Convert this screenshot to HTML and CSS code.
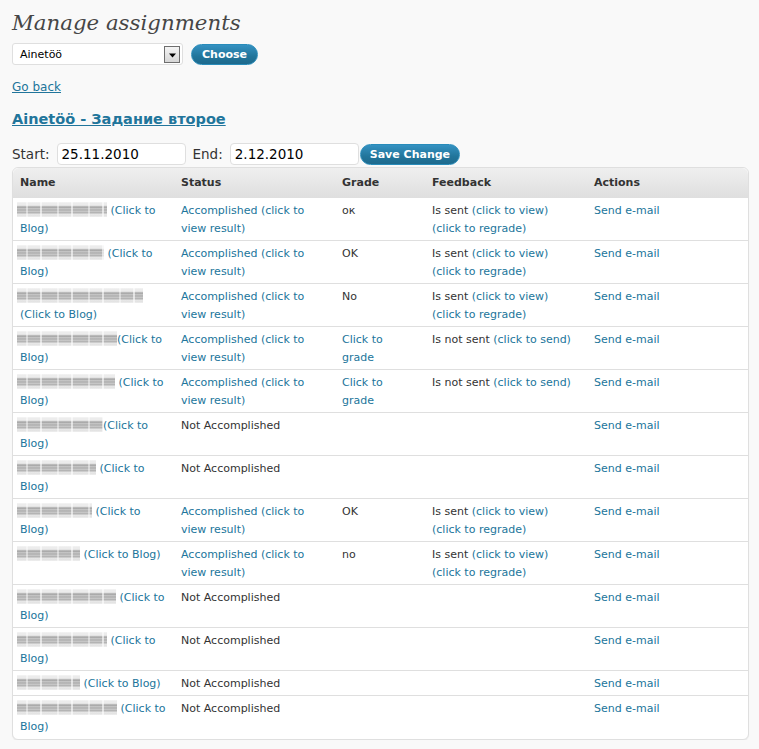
FILE: index.html
```html
<!DOCTYPE html>
<html>
<head>
<meta charset="utf-8">
<title>Manage assignments</title>
<link rel="stylesheet" href="styles.css">
</head>
<body>
<div class="wrap">
  <h2 class="title">Manage assignments</h2>
  <div class="choose-row">
    <div class="select"><span class="select-text">Ainetöö</span><span class="select-arrow"><svg width="9" height="5" viewBox="0 0 9 5"><path d="M1 0.5h7L4.5 4.5z" fill="#000"/></svg></span></div>
    <button class="btn">Choose</button>
  </div>
  <p class="back"><a href="#">Go back</a></p>
  <h3 class="task"><a href="#">Ainetöö - Задание второе</a></h3>
  <div class="dates">
    <label class="lbl">Start:</label><span class="field">25.11.2010</span>
    <label class="lbl lbl-end">End:</label><span class="field">2.12.2010</span>
    <button class="btn btn-save">Save Change</button>
  </div>
  <table class="grid">
    <thead>
      <tr><th class="c-name">Name</th><th class="c-status">Status</th><th class="c-grade">Grade</th><th class="c-fb">Feedback</th><th class="c-act">Actions</th></tr>
    </thead>
    <tbody>
      <tr><td><span class="blur" style="width:90px"></span> <a href="#">(Click to Blog)</a></td><td><a href="#">Accomplished (click to view result)</a></td><td>ок</td><td>Is sent <a href="#">(click to view)</a> <a href="#">(click to regrade)</a></td><td><a href="#">Send e-mail</a></td></tr>
      <tr><td><span class="blur" style="width:87px"></span> <a href="#">(Click to Blog)</a></td><td><a href="#">Accomplished (click to view result)</a></td><td>OK</td><td>Is sent <a href="#">(click to view)</a> <a href="#">(click to regrade)</a></td><td><a href="#">Send e-mail</a></td></tr>
      <tr><td><span class="blur" style="width:126px"></span> <a href="#">(Click to Blog)</a></td><td><a href="#">Accomplished (click to view result)</a></td><td>No</td><td>Is sent <a href="#">(click to view)</a> <a href="#">(click to regrade)</a></td><td><a href="#">Send e-mail</a></td></tr>
      <tr><td><span class="blur" style="width:100px"></span><a href="#">(Click to Blog)</a></td><td><a href="#">Accomplished (click to view result)</a></td><td><a href="#">Click to grade</a></td><td>Is not sent <a href="#">(click to send)</a></td><td><a href="#">Send e-mail</a></td></tr>
      <tr><td><span class="blur" style="width:98px"></span> <a href="#">(Click to Blog)</a></td><td><a href="#">Accomplished (click to view result)</a></td><td><a href="#">Click to grade</a></td><td>Is not sent <a href="#">(click to send)</a></td><td><a href="#">Send e-mail</a></td></tr>
      <tr><td><span class="blur" style="width:86px"></span><a href="#">(Click to Blog)</a></td><td>Not Accomplished</td><td></td><td></td><td><a href="#">Send e-mail</a></td></tr>
      <tr><td><span class="blur" style="width:79px"></span> <a href="#">(Click to Blog)</a></td><td>Not Accomplished</td><td></td><td></td><td><a href="#">Send e-mail</a></td></tr>
      <tr><td><span class="blur" style="width:75px"></span> <a href="#">(Click to Blog)</a></td><td><a href="#">Accomplished (click to view result)</a></td><td>OK</td><td>Is sent <a href="#">(click to view)</a> <a href="#">(click to regrade)</a></td><td><a href="#">Send e-mail</a></td></tr>
      <tr><td><span class="blur" style="width:63px"></span> <a href="#">(Click to Blog)</a></td><td><a href="#">Accomplished (click to view result)</a></td><td>no</td><td>Is sent <a href="#">(click to view)</a> <a href="#">(click to regrade)</a></td><td><a href="#">Send e-mail</a></td></tr>
      <tr><td><span class="blur" style="width:99px"></span> <a href="#">(Click to Blog)</a></td><td>Not Accomplished</td><td></td><td></td><td><a href="#">Send e-mail</a></td></tr>
      <tr><td><span class="blur" style="width:90px"></span> <a href="#">(Click to Blog)</a></td><td>Not Accomplished</td><td></td><td></td><td><a href="#">Send e-mail</a></td></tr>
      <tr><td><span class="blur" style="width:63px"></span> <a href="#">(Click to Blog)</a></td><td>Not Accomplished</td><td></td><td></td><td><a href="#">Send e-mail</a></td></tr>
      <tr><td><span class="blur" style="width:100px"></span> <a href="#">(Click to Blog)</a></td><td>Not Accomplished</td><td></td><td></td><td><a href="#">Send e-mail</a></td></tr>
    </tbody>
  </table>
</div>
</body>
</html>
```
FILE: styles.css
```css
html, body {
  margin: 0;
  padding: 0;
  background: #f9f9f9;
}
body {
  font-family: "DejaVu Sans", Verdana, sans-serif;
  font-size: 11px;
  color: #333;
}
a {
  color: #21759b;
  text-decoration: none;
}
.wrap {
  padding: 0 10px 0 12px;
}
.title {
  margin: 0;
  padding-top: 8px;
  height: 43px;
  box-sizing: border-box;
  font-family: "DejaVu Serif", Georgia, serif;
  font-style: italic;
  font-weight: normal;
  font-size: 21.3px;
  line-height: 29px;
  color: #464646;
}
.choose-row {
  display: flex;
  align-items: center;
  gap: 8px;
  height: 22px;
}
.select {
  box-sizing: border-box;
  width: 171px;
  height: 22px;
  background: #fff;
  border: 1px solid #dfdfdf;
  border-radius: 3px;
  display: flex;
  align-items: center;
  justify-content: space-between;
  padding: 0 2px 0 7px;
}
.select-text {
  font-size: 11px;
  color: #000;
}
.select-arrow {
  box-sizing: border-box;
  width: 16px;
  height: 17px;
  border: 1px solid #6e6e6e;
  background: linear-gradient(#f4f4f4, #d6d6d6);
  display: flex;
  align-items: center;
  justify-content: center;
  padding-top: 2px;
}
.btn {
  font-family: "DejaVu Sans", Verdana, sans-serif;
  font-size: 11px;
  font-weight: bold;
  color: #fff;
  border: 1px solid #298cba;
  border-radius: 11px;
  background: linear-gradient(#3592c2, #21759b 60%, #1e6a8d);
  padding: 0 10px;
  height: 21px;
  line-height: 19px;
  cursor: pointer;
}
.back {
  margin: 0;
  padding-top: 14px;
  font-size: 12px;
  line-height: 16px;
}
.back a {
  text-decoration: underline;
}
.task {
  margin: 0;
  padding-top: 15px;
  font-size: 14.5px;
  line-height: 18px;
  font-weight: bold;
}
.task a {
  text-decoration: underline;
}
.dates {
  display: flex;
  align-items: center;
  margin-top: 15px;
  height: 22px;
  font-size: 13.5px;
}
.lbl {
  margin-right: 7px;
}
.lbl-end {
  margin-left: 7px;
}
.field {
  box-sizing: border-box;
  width: 129px;
  height: 22px;
  border: 1px solid #dfdfdf;
  border-radius: 4px;
  background: #fff;
  padding: 0 4px;
  line-height: 20px;
  color: #000;
}
.btn-save {
  margin-left: 1px;
  padding: 0 9px;
}
.grid {
  margin-top: 2px;
  width: 737px;
  border-collapse: separate;
  border-spacing: 0;
  border: 1px solid #dfdfdf;
  border-radius: 6px;
  background: #fff;
  table-layout: fixed;
  box-shadow: 0 1px 1px rgba(0,0,0,0.06);
}
.grid th {
  height: 29px;
  padding: 0 7px;
  text-align: left;
  font-weight: bold;
  font-size: 11px;
  color: #333;
  background: linear-gradient(#efefef, #dfdfdf);
  border-bottom: 1px solid #dfdfdf;
}
.grid th:first-child { border-top-left-radius: 6px; }
.grid th:last-child { border-top-right-radius: 6px; }
.c-name { width: 147px; }
.c-status { width: 147px; }
.c-grade { width: 76px; }
.c-fb { width: 148px; }
.grid td {
  vertical-align: top;
  padding: 4px 7px 2px 7px;
  line-height: 18px;
  border-bottom: 1px solid #dfdfdf;
}
.grid tbody tr:last-child td {
  border-bottom: none;
  padding-bottom: 3px;
}
.blur {
  display: inline-block;
  height: 15px;
  margin-left: -3px;
  vertical-align: -3px;
  background:
    repeating-linear-gradient(90deg, rgba(255,255,255,0) 0 9px, rgba(255,255,255,0.45) 9px 11px, rgba(255,255,255,0) 11px 23px, rgba(255,255,255,0.6) 23px 25px, rgba(255,255,255,0) 25px 31px),
    repeating-linear-gradient(0deg, rgba(255,255,255,0) 0 2px, rgba(255,255,255,0.3) 2px 3px),
    linear-gradient(#ececec 0, #ececec 3px, #c2c2c2 4px, #a3a3a3 6px, #bcbcbc 8px, #a8a8a8 10px, #d8d8d8 12px, #efefef 15px);
}
```
